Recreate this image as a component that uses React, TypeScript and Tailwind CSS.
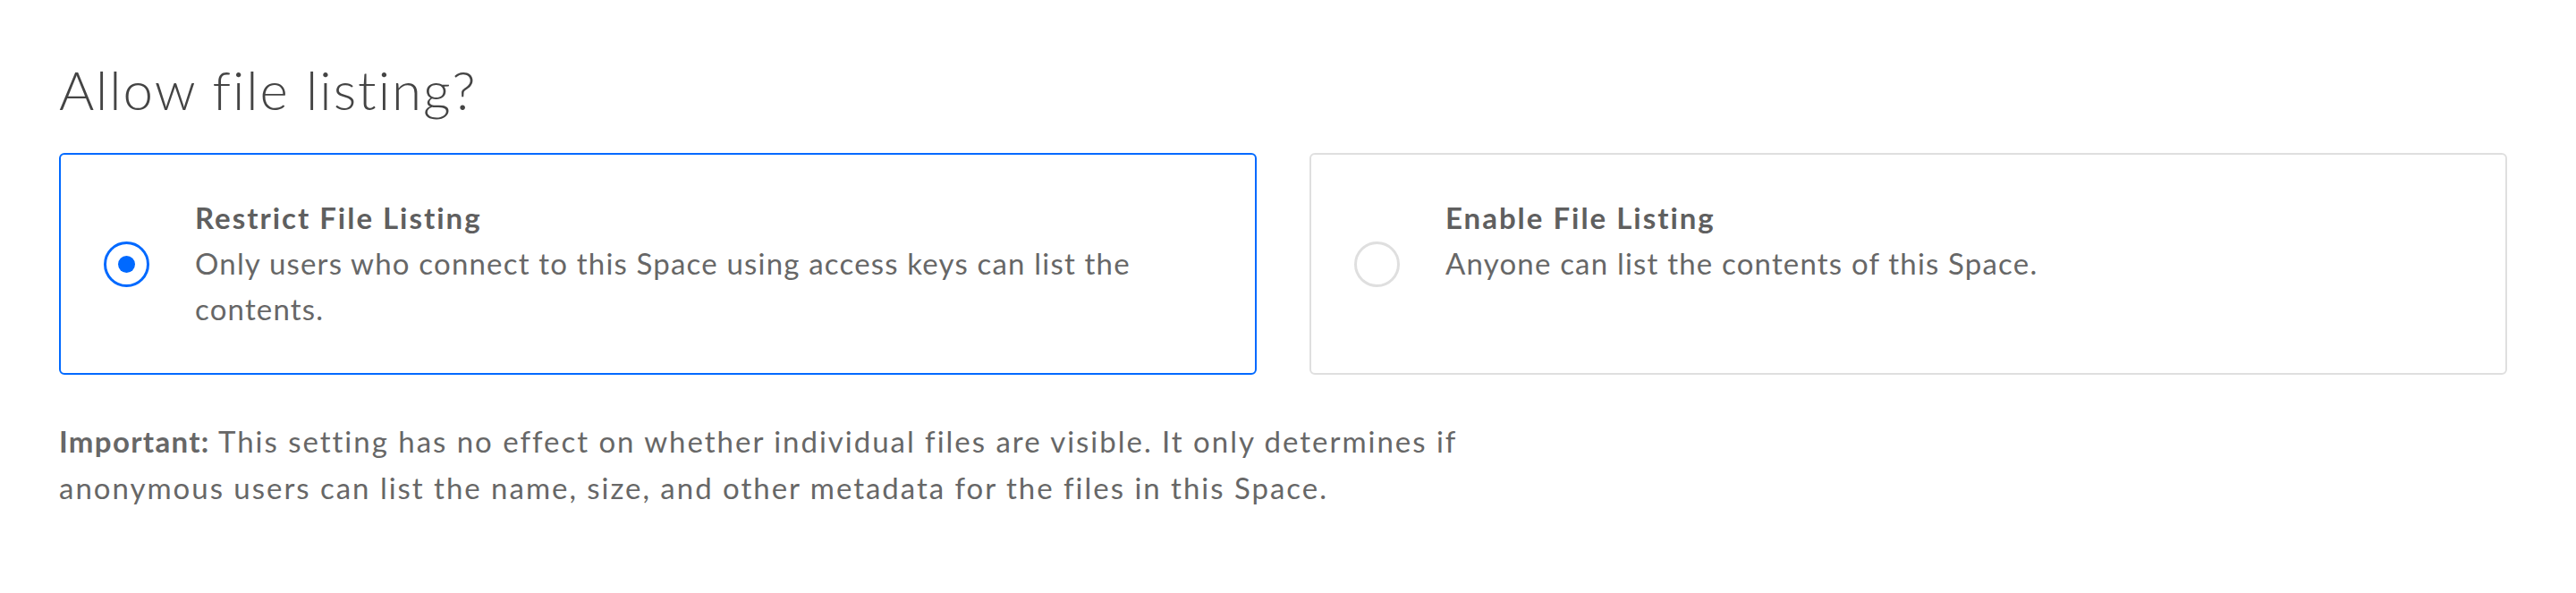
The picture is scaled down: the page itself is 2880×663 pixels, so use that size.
import { useState } from 'react';

type Choice = 'restrict' | 'enable';

const options: { id: Choice; title: string; description: string }[] = [
  {
    id: 'restrict',
    title: 'Restrict File Listing',
    description: 'Only users who connect to this Space using access keys can list the contents.',
  },
  {
    id: 'enable',
    title: 'Enable File Listing',
    description: 'Anyone can list the contents of this Space.',
  },
];

export default function App() {
  const [choice, setChoice] = useState<Choice>('restrict');

  return (
    <div className="min-h-screen bg-white pl-[66px] pr-[77px] pt-[64px] font-['Lato','Liberation_Sans',sans-serif] text-[#676767]">
      <h1 className="text-[60px] leading-[72px] font-light tracking-[0.033em] text-[#444444]">Allow file listing?</h1>

      {/* Options */}
      <div className="mt-[35px] grid grid-cols-2 gap-[59px]">
        {options.map((opt) => {
          const active = choice === opt.id;
          return (
            <button
              key={opt.id}
              type="button"
              onClick={() => setChoice(opt.id)}
              className={`flex h-[248px] items-stretch rounded-[6px] border-2 bg-white px-[48px] text-left ${
                active ? 'border-[#0069ff]' : 'border-[#dfdfdf]'
              }`}
            >
              <div className="flex items-center">
                <span
                  className={`flex h-[51px] w-[51px] shrink-0 items-center justify-center rounded-full border-[3px] ${
                    active ? 'border-[#0069ff]' : 'border-[#dfdfdf]'
                  }`}
                >
                  {active && <span className="h-[19px] w-[19px] rounded-full bg-[#0069ff]" />}
                </span>
              </div>
              <div className="ml-[51px] pt-[45px] text-[33px] leading-[51px]">
                <div className="font-bold tracking-[0.06em] text-[#5f5f5f]">{opt.title}</div>
                <p className="tracking-[0.036em] text-[#676767]">{opt.description}</p>
              </div>
            </button>
          );
        })}
      </div>

      <p className="mt-[48px] max-w-[1680px] text-[33px] leading-[52px] tracking-[0.06em] text-[#676767]">
        <span className="font-bold tracking-[0.04em]">Important:</span> This setting has no effect on whether
        individual files are visible. It only determines if anonymous users can list the name, size, and other
        metadata for the files in this Space.
      </p>
    </div>
  );
}
